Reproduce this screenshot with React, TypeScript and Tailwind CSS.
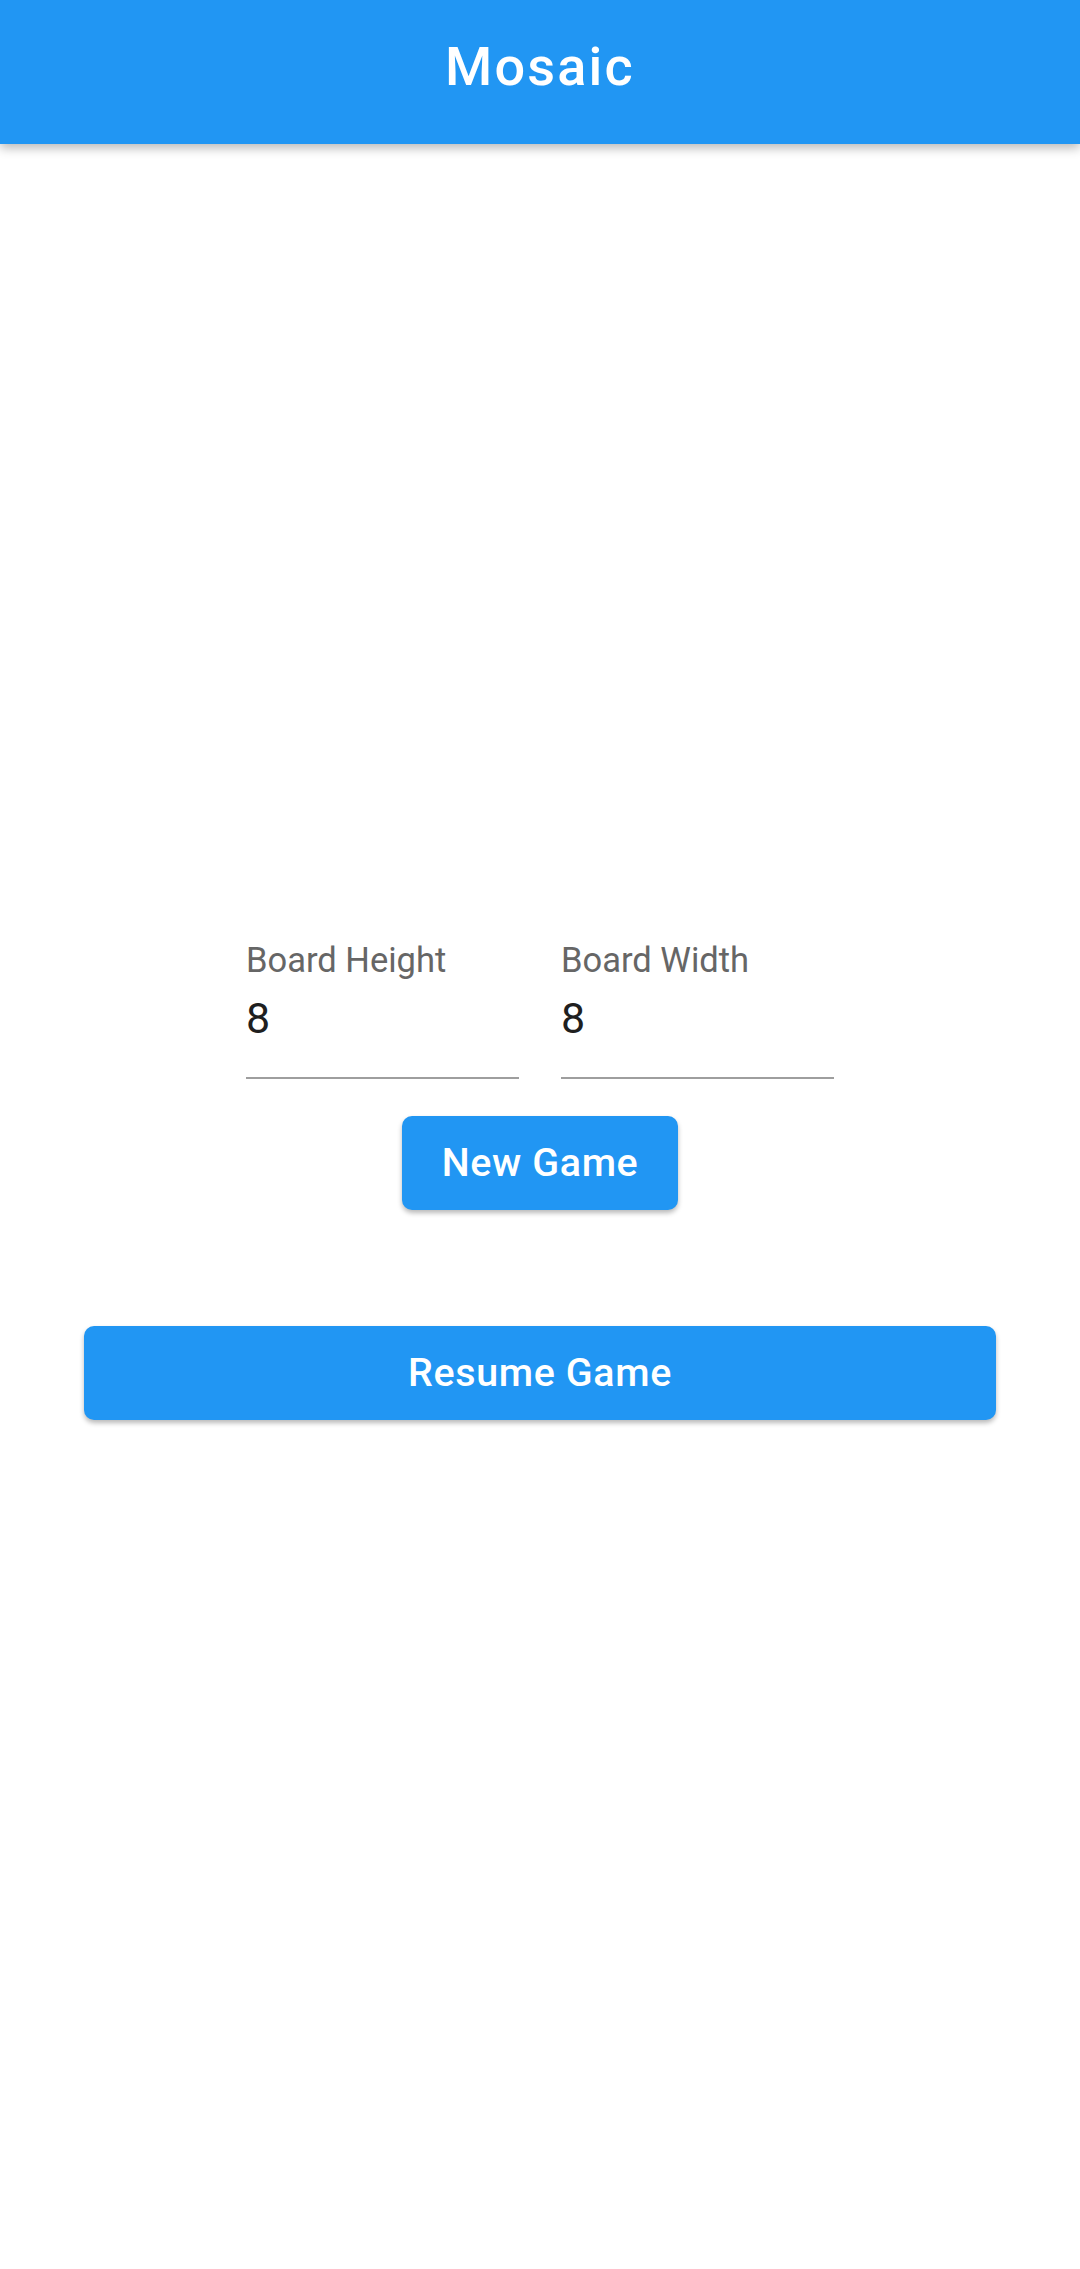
import React from "react";

type FieldProps = { label: string; value: string };

function BoardField({ label, value }: FieldProps) {
  return (
    <div className="flex w-[273px] flex-col border-b-2 border-[#9e9e9e]">
      <span className="text-[34.5px] leading-none text-[#666666]">{label}</span>
      <span className="mt-[19px] pb-[37px] text-[43px] leading-none text-[#1f1f1f]">
        {value}
      </span>
    </div>
  );
}

export default function App() {
  return (
    <div
      className="flex min-h-[2269px] w-full flex-col bg-white"
      style={{ fontFamily: "Roboto, 'Noto Sans', sans-serif" }}
    >
      {/* App bar */}
      <header className="relative z-10 flex h-[144px] items-center justify-center bg-[#2196F3] pb-[11px] shadow-[0_4px_10px_rgba(0,0,0,0.28)]">
        <h1 className="text-[54px] font-medium leading-none tracking-[2.2px] text-white">
          Mosaic
        </h1>
      </header>

      <main className="flex flex-col items-center pt-[799px]">
        <div className="flex gap-[42px]">
          <BoardField label="Board Height" value="8" />
          <BoardField label="Board Width" value="8" />
        </div>

        <button
          type="button"
          className="mt-[37px] flex h-[94px] w-[276px] items-center justify-center rounded-[10px] bg-[#2196F3] text-[39.4px] font-medium tracking-[0.65px] text-white shadow-[0_3px_5px_rgba(0,0,0,0.28)]"
        >
          New Game
        </button>

        <button
          type="button"
          className="mt-[116px] flex h-[94px] w-[912px] items-center justify-center rounded-[10px] bg-[#2196F3] text-[39.4px] font-medium tracking-[0.65px] text-white shadow-[0_3px_5px_rgba(0,0,0,0.28)]"
        >
          Resume Game
        </button>
      </main>
    </div>
  );
}
